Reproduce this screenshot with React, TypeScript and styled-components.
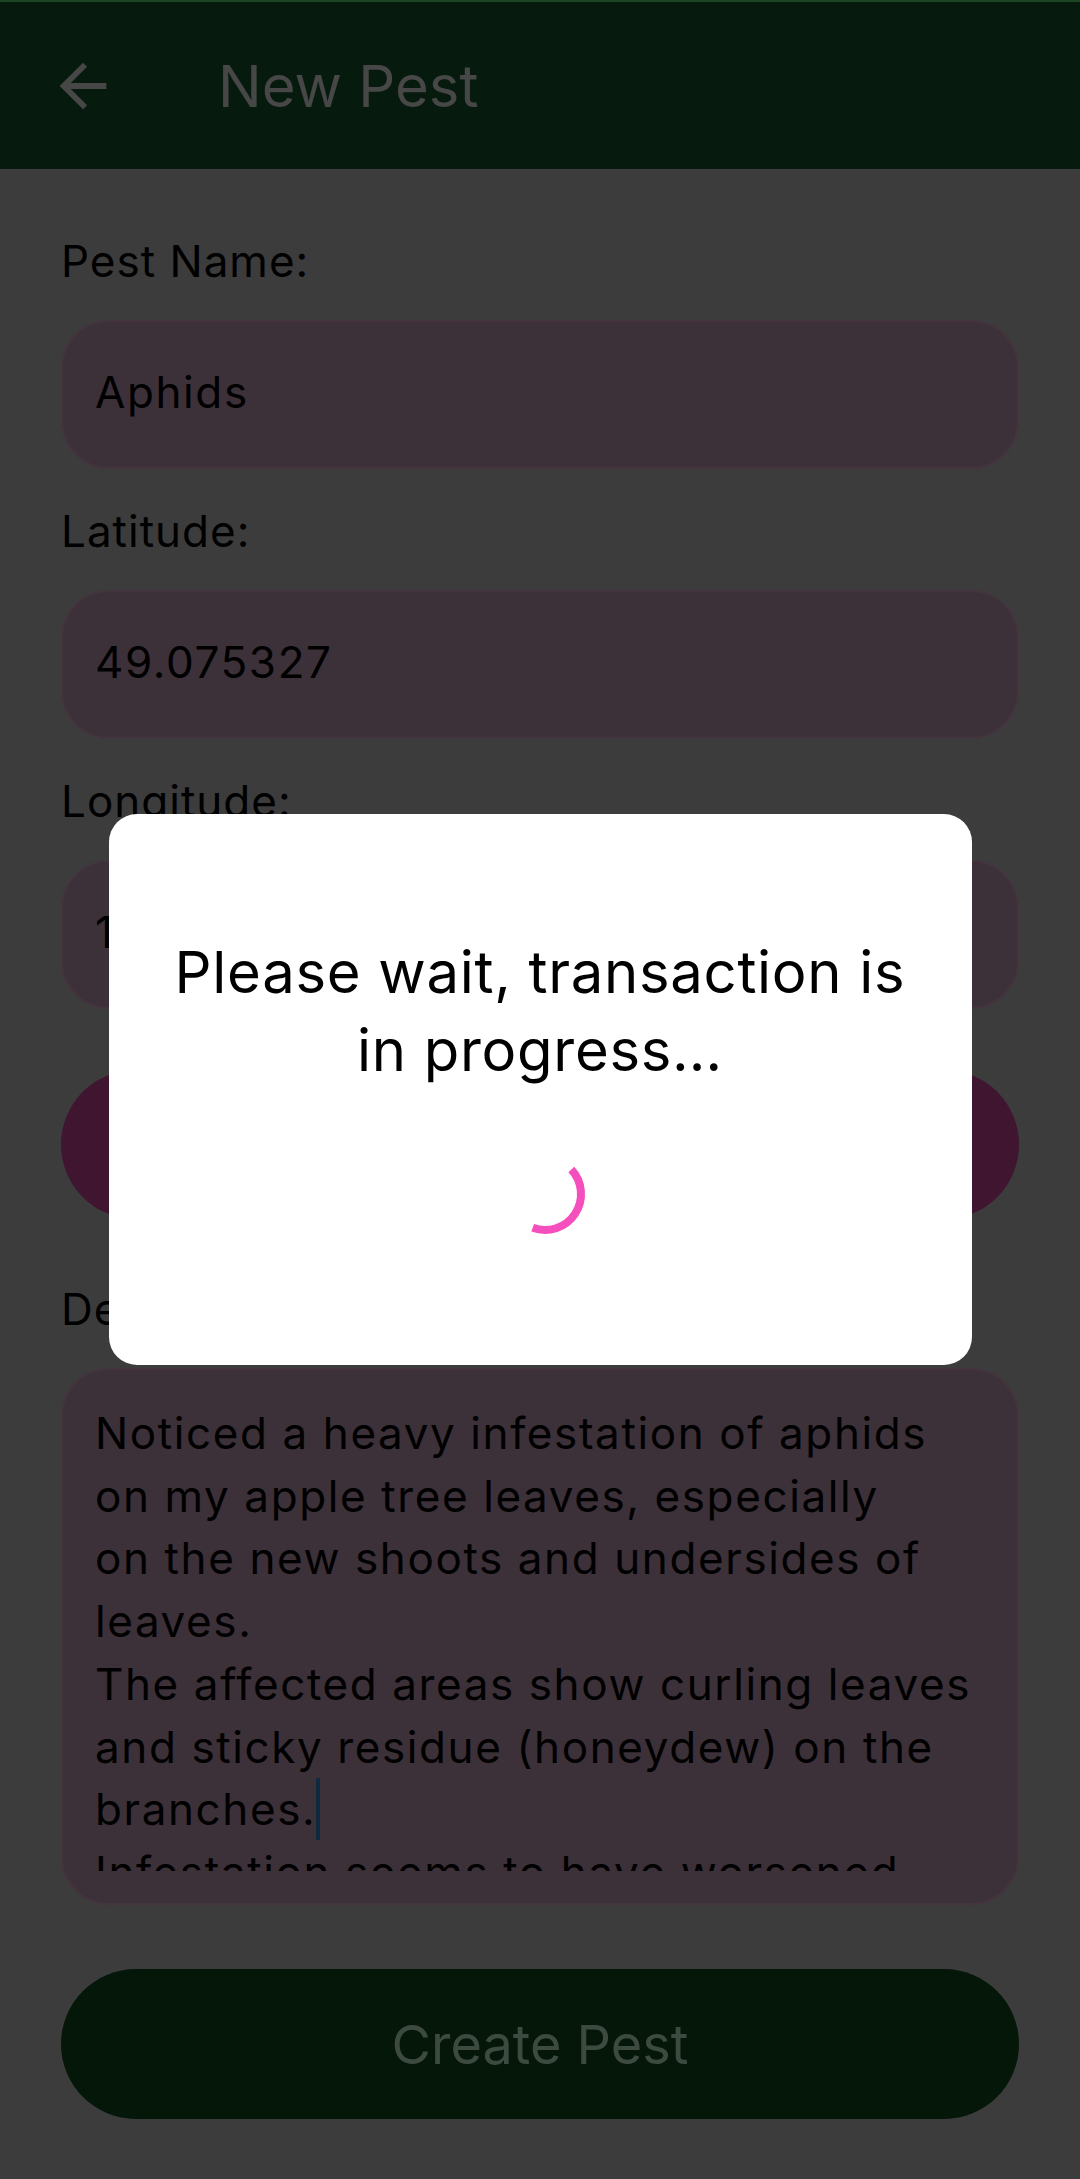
import React from "react";
import styled, { createGlobalStyle } from "styled-components";

const Global = createGlobalStyle`
  * { box-sizing: border-box; }
  html, body { margin: 0; padding: 0; background: #3c3c3c; }
  body { font-family: "Inter", "Noto Sans", sans-serif; }
`;

const Screen = styled.div`
  min-height: 100vh;
  background: #3c3c3c;
  display: flex;
  flex-direction: column;
`;

const Header = styled.header`
  height: 169px;
  background: #061a0e;
  border-top: 2px solid #1c4524;
  display: flex;
  align-items: center;
  padding-left: 48px;
  gap: 100px;
`;

const BackButton = styled.button`
  width: 70px;
  height: 70px;
  padding: 0;
  border: none;
  background: transparent;
  display: flex;
  align-items: center;
  justify-content: center;
  color: #474747;
`;

const Title = styled.h1`
  margin: 0;
  font-size: 58px;
  font-weight: 400;
  line-height: 70px;
  color: #474747;
`;

const Form = styled.main`
  display: flex;
  flex-direction: column;
  gap: 32px;
  padding: 62px 61px 60px;
`;

const Group = styled.div<{ $offset?: number }>`
  display: flex;
  flex-direction: column;
  gap: 29px;
  margin-top: ${(p) => p.$offset ?? 0}px;
`;

const Label = styled.label`
  font-size: 44px;
  line-height: 60px;
  letter-spacing: 1px;
  color: #000;
`;

const Input = styled.input`
  height: 149px;
  width: 100%;
  padding: 0 32px 6px;
  border-radius: 48px;
  border: 2px solid #44343e;
  background: #3c3039;
  font-family: "Inter", "Noto Sans", sans-serif;
  font-size: 44px;
  letter-spacing: 1.6px;
  color: #000;
  outline: none;
`;

const PinkButton = styled.button`
  margin-top: 29px;
  height: 149px;
  border: none;
  border-radius: 75px;
  background: #3f1530;
  color: #3f1530;
  font-family: "Inter", sans-serif;
  font-size: 44px;
`;

const TextBox = styled.div`
  height: 537px;
  padding: 32px;
  border-radius: 48px;
  border: 2px solid #44343e;
  background: #3c3039;
`;

const TextContent = styled.div`
  height: 100%;
  overflow: hidden;
  white-space: pre;
  font-size: 44px;
  line-height: 62.7px;
  letter-spacing: 1.6px;
  color: #000;
`;

const Caret = styled.span`
  display: inline-block;
  width: 4px;
  height: 62px;
  margin-left: 0;
  vertical-align: top;
  background: #0f2a3f;
`;

const CreateButton = styled.button`
  margin-top: 32px;
  height: 150px;
  border: none;
  border-radius: 75px;
  background: #051709;
  color: #3d4a40;
  font-family: "Inter", sans-serif;
  font-size: 54px;
`;

const Overlay = styled.div`
  position: fixed;
  inset: 0;
  display: flex;
  align-items: center;
  justify-content: center;
`;

const Dialog = styled.div`
  width: 863px;
  height: 551px;
  background: #fff;
  border-radius: 28px;
  padding-top: 119px;
  display: flex;
  flex-direction: column;
  align-items: center;
`;

const DialogText = styled.p`
  margin: 0;
  text-align: center;
  font-size: 58px;
  line-height: 78px;
  letter-spacing: 0.7px;
  color: #000;
`;

const Spinner = styled.svg`
  margin-top: 57px;
  width: 96px;
  height: 96px;
`;

const ArrowBack = () => (
  <svg width="70" height="70" viewBox="0 0 24 24" fill="currentColor">
    <path d="M20 11H7.83l5.59-5.59L12 4l-8 8 8 8 1.41-1.41L7.83 13H20v-2z" />
  </svg>
);

const description = [
  "Noticed a heavy infestation of aphids",
  "on my apple tree leaves, especially",
  "on the new shoots and undersides of",
  "leaves.",
  "The affected areas show curling leaves",
  "and sticky residue (honeydew) on the",
];

export default function App() {
  return (
    <>
      <Global />
      <Screen>
        <Header>
          <BackButton aria-label="Back">
            <ArrowBack />
          </BackButton>
          <Title>New Pest</Title>
        </Header>
        <Form>
          <Group>
            <Label>Pest Name:</Label>
            <Input readOnly value="Aphids" />
          </Group>
          <Group>
            <Label>Latitude:</Label>
            <Input readOnly value="49.075327" />
          </Group>
          <Group>
            <Label>Longitude:</Label>
            <Input readOnly value="19.612946" />
          </Group>
          <PinkButton>Use Location</PinkButton>
          <Group $offset={28}>
            <Label>Description:</Label>
            <TextBox>
              <TextContent>
                {description.join("\n") + "\nbranches."}
                <Caret />
                {"\nInfestation seems to have worsened\nover the past week."}
              </TextContent>
            </TextBox>
          </Group>
          <CreateButton>Create Pest</CreateButton>
        </Form>
        <Overlay>
          <Dialog role="dialog">
            <DialogText>
              Please wait, transaction is
              <br />
              in progress…
            </DialogText>
            <Spinner viewBox="0 0 96 96">
              <path
                d="M79.33 23.45 A36 36 0 0 1 40.69 81.83"
                fill="none"
                stroke="#f54fbd"
                strokeWidth="8"
              />
            </Spinner>
          </Dialog>
        </Overlay>
      </Screen>
    </>
  );
}
